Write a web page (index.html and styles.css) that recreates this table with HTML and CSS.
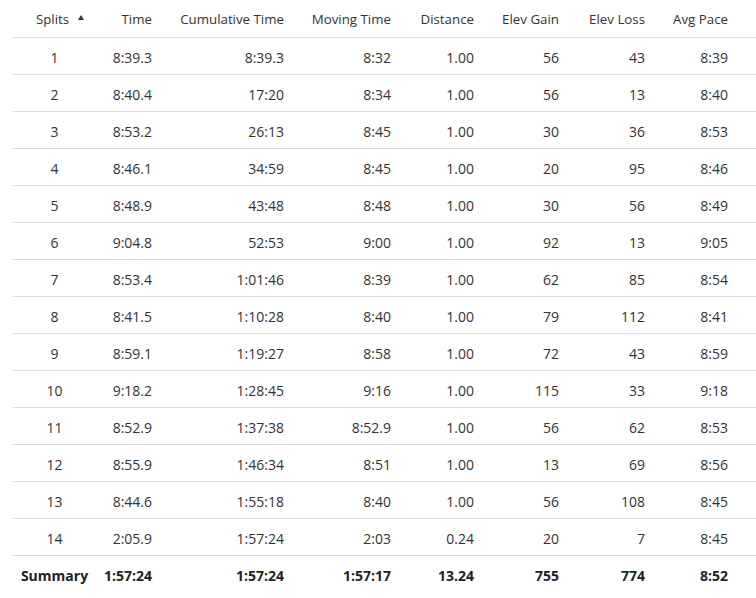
FILE: index.html
```html
<!DOCTYPE html>
<html>
<head>
<meta charset="utf-8">
<link rel="stylesheet" href="styles.css">
</head>
<body>
<table class="splits">
  <colgroup>
    <col class="c-split"><col class="c-time"><col class="c-cum"><col class="c-move"><col class="c-dist"><col class="c-gain"><col class="c-loss"><col class="c-pace">
  </colgroup>
  <thead>
    <tr>
      <th class="split-head"><span class="sort">Splits<span class="arrow"></span></span></th>
      <th>Time</th>
      <th>Cumulative Time</th>
      <th>Moving Time</th>
      <th>Distance</th>
      <th>Elev Gain</th>
      <th>Elev Loss</th>
      <th class="last">Avg Pace</th>
    </tr>
  </thead>
  <tbody>
    <tr><td class="split">1</td><td>8:39.3</td><td>8:39.3</td><td>8:32</td><td>1.00</td><td>56</td><td>43</td><td class="last">8:39</td></tr>
    <tr><td class="split">2</td><td>8:40.4</td><td>17:20</td><td>8:34</td><td>1.00</td><td>56</td><td>13</td><td class="last">8:40</td></tr>
    <tr><td class="split">3</td><td>8:53.2</td><td>26:13</td><td>8:45</td><td>1.00</td><td>30</td><td>36</td><td class="last">8:53</td></tr>
    <tr><td class="split">4</td><td>8:46.1</td><td>34:59</td><td>8:45</td><td>1.00</td><td>20</td><td>95</td><td class="last">8:46</td></tr>
    <tr><td class="split">5</td><td>8:48.9</td><td>43:48</td><td>8:48</td><td>1.00</td><td>30</td><td>56</td><td class="last">8:49</td></tr>
    <tr><td class="split">6</td><td>9:04.8</td><td>52:53</td><td>9:00</td><td>1.00</td><td>92</td><td>13</td><td class="last">9:05</td></tr>
    <tr><td class="split">7</td><td>8:53.4</td><td>1:01:46</td><td>8:39</td><td>1.00</td><td>62</td><td>85</td><td class="last">8:54</td></tr>
    <tr><td class="split">8</td><td>8:41.5</td><td>1:10:28</td><td>8:40</td><td>1.00</td><td>79</td><td>112</td><td class="last">8:41</td></tr>
    <tr><td class="split">9</td><td>8:59.1</td><td>1:19:27</td><td>8:58</td><td>1.00</td><td>72</td><td>43</td><td class="last">8:59</td></tr>
    <tr><td class="split">10</td><td>9:18.2</td><td>1:28:45</td><td>9:16</td><td>1.00</td><td>115</td><td>33</td><td class="last">9:18</td></tr>
    <tr><td class="split">11</td><td>8:52.9</td><td>1:37:38</td><td>8:52.9</td><td>1.00</td><td>56</td><td>62</td><td class="last">8:53</td></tr>
    <tr><td class="split">12</td><td>8:55.9</td><td>1:46:34</td><td>8:51</td><td>1.00</td><td>13</td><td>69</td><td class="last">8:56</td></tr>
    <tr><td class="split">13</td><td>8:44.6</td><td>1:55:18</td><td>8:40</td><td>1.00</td><td>56</td><td>108</td><td class="last">8:45</td></tr>
    <tr><td class="split">14</td><td>2:05.9</td><td>1:57:24</td><td>2:03</td><td>0.24</td><td>20</td><td>7</td><td class="last">8:45</td></tr>
  </tbody>
  <tfoot>
    <tr><td class="split">Summary</td><td>1:57:24</td><td>1:57:24</td><td>1:57:17</td><td>13.24</td><td>755</td><td>774</td><td class="last">8:52</td></tr>
  </tfoot>
</table>
</body>
</html>
```

FILE: styles.css
```css
html, body {
  margin: 0;
  padding: 0;
  background: #ffffff;
}

body {
  padding-left: 13px;
  font-family: "Open Sans", "Liberation Sans", sans-serif;
  font-size: 14px;
  color: #333333;
}

.splits {
  border-collapse: collapse;
  table-layout: fixed;
  width: 743px;
}

.c-split { width: 83px; }
.c-time { width: 64px; }
.c-cum { width: 132px; }
.c-move { width: 107px; }
.c-dist { width: 83px; }
.c-gain { width: 85px; }
.c-loss { width: 86px; }
.c-pace { width: 103px; }

.splits th,
.splits td {
  height: 37px;
  padding: 3px 8px 0 8px;
  box-sizing: border-box;
  text-align: right;
  white-space: nowrap;
  vertical-align: middle;
  line-height: 19px;
}

.splits th {
  font-weight: normal;
  font-size: 13.3px;
  color: #333333;
}

.splits thead tr,
.splits tbody tr {
  border-bottom: 1px solid #dddddd;
}

.splits .split {
  text-align: center;
  padding-left: 0;
  padding-right: 0;
}

.splits .split-head {
  text-align: center;
  padding-left: 0;
  padding-right: 4px;
}

.splits .last {
  padding-right: 28px;
}

.sort {
  position: relative;
}

.arrow {
  position: absolute;
  left: 100%;
  top: 5px;
  margin-left: 9px;
  width: 0;
  height: 0;
  border-left: 3.5px solid transparent;
  border-right: 3.5px solid transparent;
  border-bottom: 5px solid #333333;
}

.splits tfoot td {
  font-weight: bold;
  color: #222222;
}
```
